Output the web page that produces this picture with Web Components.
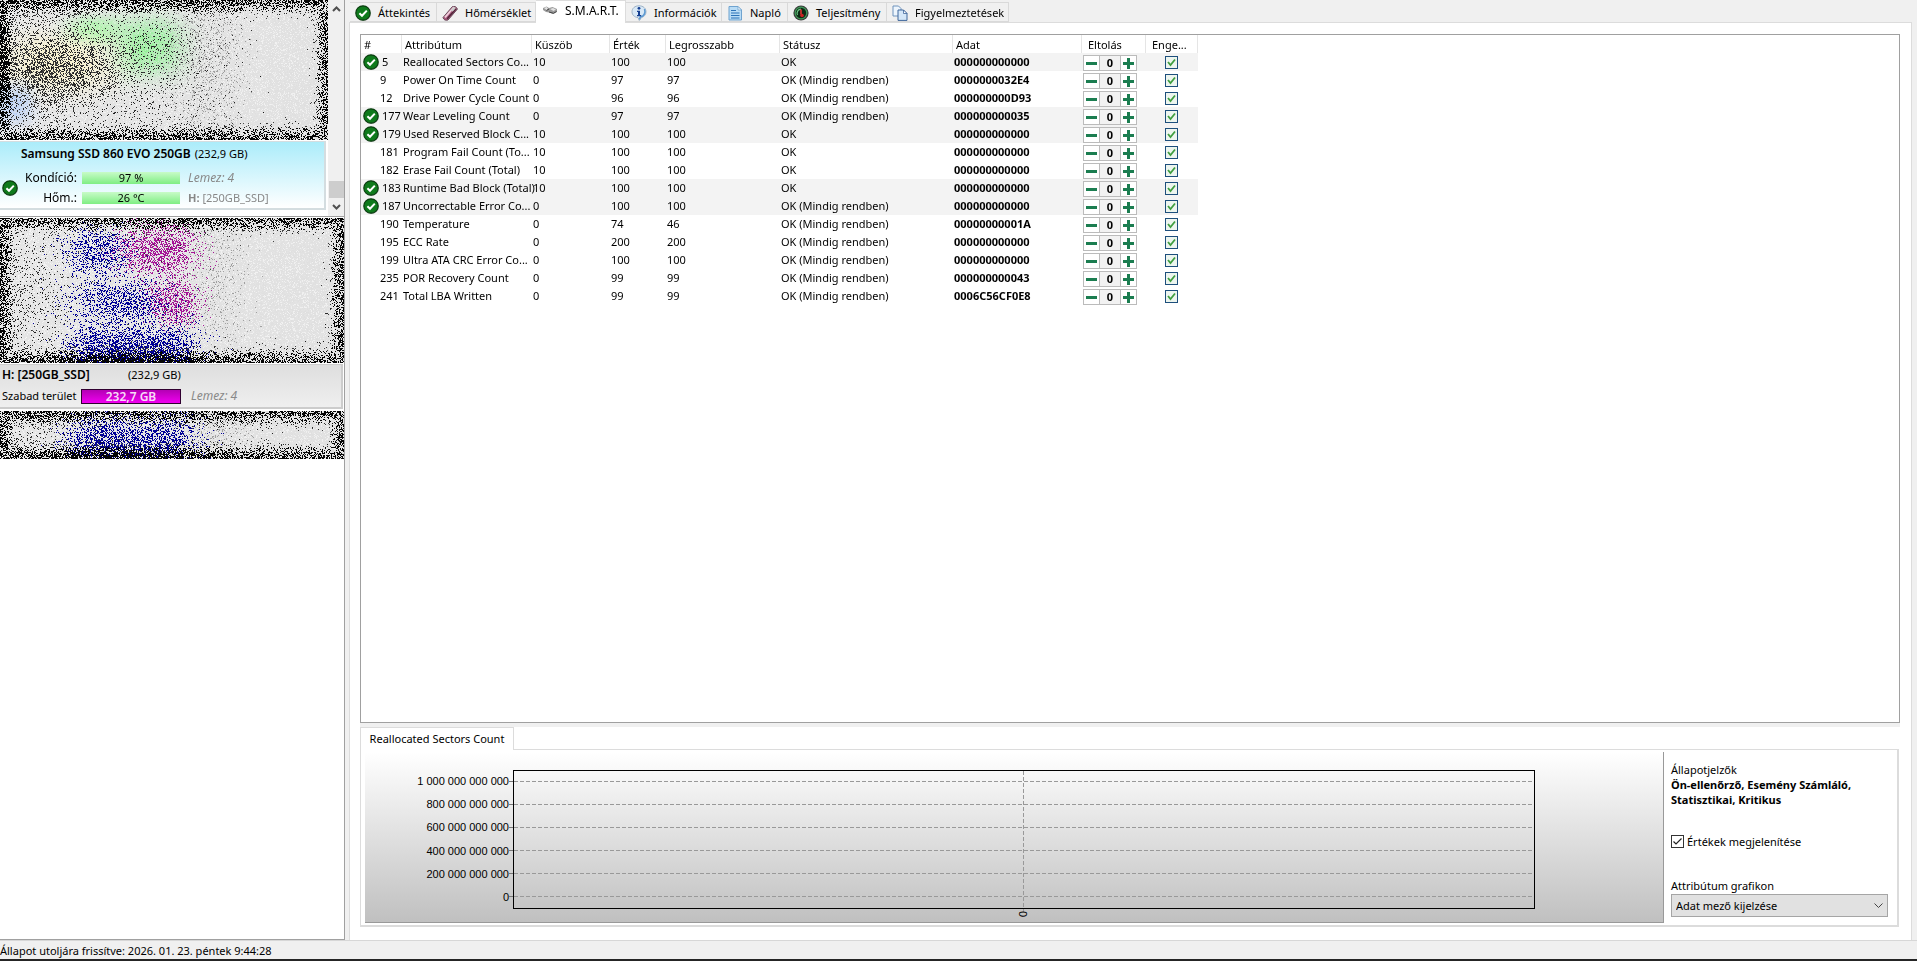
<!DOCTYPE html>
<html lang="hu">
<head>
<meta charset="utf-8">
<title>S.M.A.R.T.</title>
<style>
html, body { margin: 0; height: 100%; }
body { font: 11px/18px "Noto Sans", "Open Sans", sans-serif; color: #000; background: #f0f0f0; overflow: hidden; }
</style>
</head>
<body>
<disk-monitor></disk-monitor>
<script>
const define = (name, html, setup) => {
  const template = document.createElement('template');
  template.innerHTML = html;
  customElements.define(name, class extends HTMLElement {
    constructor() {
      super();
      this.attachShadow({ mode: 'open' }).append(template.content.cloneNode(true));
    }
    connectedCallback() { if (setup) setup(this, this.shadowRoot); }
  });
};

/* ---------- icons ---------- */
const ICONS = {
  ok: `<circle cx="8.7" cy="8.9" r="7" fill="#777" opacity=".6"/><circle cx="8" cy="8" r="7.2" fill="#0f7a1c" stroke="#0a3d10" stroke-width="1.2"/><path d="M4.4 8.2l2.6 2.6 4.8-5.2" fill="none" stroke="#fff" stroke-width="2"/>`,
  temp: `<path d="M1 12.500L10.500 1.500q3.500-1 5 2.500L6 15Q2 16 1 12.500z" fill="#a8587c" stroke="#5d4150" stroke-width=".9"/><path d="M3 12.300L12 2" stroke="#f0cfdc" stroke-width="1.800"/><path d="M5.200 13.700L14 3.800" stroke="#4e2438" stroke-width="1.300"/><path d="M8.500 5.500L11.500 2l2.500.7-3.200 3.800z" fill="#ccc"/>`,
  disk: `<path d="M1 5l3.500-1.500 2.500 1.500 3.500-1 4.500 2v3l-4 2-4-1.500-3-.5-3-2z" fill="#9a9a9a"/><path d="M2 5l2.500-1L6 5.500 4.500 7zM8 6l3-1 3 1.500-2.500 1.500z" fill="#e2e2e2"/><path d="M4.500 7.500L7 6M7 9l4.500 1.300 3-1.800" stroke="#444" fill="none"/>`,
  info: `<path d="M8 .8c4.200 0 7 2.500 7 6 0 3-2 5-4.500 5.700L8.300 15.500 7 12.600C3.500 12.200 1 10 1 6.800c0-3.500 2.800-6 7-6z" fill="#d8e8f6" stroke="#9fb3c6"/><path d="M13.500 4c1.500 4-1 7.500-4 7.800l-1.200 2.500" fill="none" stroke="#5c9ad2" stroke-width="1.600"/><circle cx="8" cy="3.300" r="1.400" fill="#153f91"/><path d="M6 5.800h3v4.200h1.200v1.200H6V10h1V7H6z" fill="#153f91"/>`,
  log: `<path d="M2 1.500h9l3.500 3.500v10H2z" fill="#b9dcf6" stroke="#6fa3cf"/><path d="M11 1.500V5h3.500z" fill="#fff" stroke="#6fa3cf" stroke-width=".8"/><path d="M4 5.500h5M4 8h8.500M4 10.500h8.500M4 13h8.500" stroke="#2d73b8" stroke-width="1.200"/>`,
  gauge: `<circle cx="8" cy="8" r="7.600" fill="#3c3c3c"/><circle cx="8" cy="8" r="5.800" fill="#0d2a14" stroke="#3f9a58" stroke-width="1.200"/><path d="M4.500 10A4 4 0 0 1 8 4.200" fill="none" stroke="#69c483" stroke-width="1.200"/><path d="M8 9.500V4.500" stroke="#e33" stroke-width="1.500"/><circle cx="9" cy="10.500" r="1.800" fill="#c22"/>`,
  copy: `<path d="M1 1h5.500L9 3.500V11H1z" fill="#edf5fd" stroke="#6f93bd"/><path d="M6 5h5.500L15 8.500V15.400H6z" fill="#d5e7f8" stroke="#3f669b"/><path d="M11.500 5v3.500H15z" fill="#fff" stroke="#3f669b" stroke-width=".8"/>`
};
define('ui-icon', `<style>:host{display:block;flex:none;width:16px;height:16px}svg{display:block;width:100%;height:100%;overflow:visible}</style><svg viewBox="0 0 16 16" aria-hidden="true"></svg>`,
  (el, root) => { root.querySelector('svg').innerHTML = ICONS[el.getAttribute('name')]; });

/* ---------- pixel noise that hides private entries ---------- */
const NOISE = {
  disks: { dark: [[60, 72, 60, 26, .45], [120, 40, 90, 30, .2], [20, 60, 60, 60, .3], [110, 90, 100, 40, .14]], grey: [[215, 65, 34, 70, .16]],
    tint: [[98, 30, 28, 14, [160, 245, 160]], [155, 46, 36, 28, [140, 242, 145]], [60, 62, 56, 28, [254, 246, 200]], [12, 104, 22, 20, [180, 205, 248]]], spots: [] },
  volumes: { dark: [[28, 70, 40, 60, .16], [120, 150, 80, 18, .35], [120, 70, 60, 80, .04]], grey: [[215, 60, 30, 80, .1]], tint: [],
    spots: [[98, 33, 28, 20, .46, [0, 0, 150]], [158, 32, 34, 22, .5, [165, 20, 150]], [120, 84, 44, 19, .45, [0, 0, 150]], [174, 84, 22, 20, .45, [165, 20, 150]], [106, 132, 34, 22, .6, [0, 0, 150]], [160, 134, 32, 22, .6, [0, 0, 150]]] },
  tail: { dark: [[28, 24, 40, 30, .15], [120, 46, 80, 14, .3]], grey: [[215, 24, 30, 40, .12]], tint: [],
    spots: [[100, 30, 32, 22, .5, [0, 0, 150]], [156, 30, 36, 22, .5, [0, 0, 150]]] }
};
define('noise-mask', `<style>:host{display:block;flex:none}canvas{display:block;width:100%;height:100%;image-rendering:pixelated}</style><canvas></canvas>`, (el, root) => {
  const c = root.querySelector('canvas'), W = c.width = el.clientWidth, H = c.height = el.clientHeight;
  const cfg = NOISE[el.getAttribute('kind')], ctx = c.getContext('2d'), img = ctx.createImageData(W, H);
  let s = 12345 + H;
  const rnd = () => { s = (Math.imul(s, 1664525) + 1013904223) >>> 0; return s / 4294967296; };
  const bump = (x, y, b) => Math.exp(-((Math.abs(x - b[0]) / b[2]) ** 2.6) - (Math.abs(y - b[1]) / b[3]) ** 2.6);
  for (let y = 0; y < H; y++) for (let x = 0; x < W; x++) {
    const e = Math.min(x, y, W - 1 - x, H - 1 - y);
    let v = 229 - 4 * x / W + (rnd() - .5) * 6;
    if (rnd() < .18) v += 14;
    let col = [v, v, v];
    for (const t of cfg.tint) { const k = bump(x, y, t) * (.4 + rnd() * .6); col = col.map((q, i) => q + (t[4][i] - q) * k); }
    for (const g of cfg.grey) if (rnd() < g[4] * bump(x, y, g)) col = [160, 160, 160];
    for (const p of cfg.spots) if (rnd() < p[4] * bump(x, y, p)) col = p[5];
    let d = .56 * Math.exp(-((e / 10) ** 2));
    for (const b of cfg.dark) d += b[4] * bump(x, y, b) * .6;
    if (rnd() < d) { const n = e < 12 ? 5 : 20 + rnd() * 60; col = [n, n, n]; }
    img.data.set([...col, 255], (y * W + x) * 4);
  }
  ctx.putImageData(img, 0, 0);
});

/* ---------- left column ---------- */
define('level-bar', `<style>
:host{display:block;box-sizing:border-box;width:98px;height:12px;font-size:11px;line-height:12px;text-align:center;background:linear-gradient(#c8fbc8,#7fee83)}
:host([volume]){width:100px;height:15px;line-height:14px;border:1px solid #300030;background:linear-gradient(#b400b4,#f000f0);color:#f7dcf7;font-weight:600;font-size:12px}
</style><slot></slot>`);

define('disk-card', `<style>
:host{display:block;box-sizing:border-box;width:326px;height:69px;margin-top:1px;padding:3px 0 0 2px;border:solid #d4dde0;border-width:1px 2px 2px 0;background:linear-gradient(#abecfa,#fff)}
h2{margin:0 0 6px 19px;font-size:12px;line-height:18px;font-weight:400;display:flex;gap:4px}
h2 b{font-weight:600}
h2 span{font-size:11px}
.body{display:grid;grid-template-columns:16px 64px 98px 1fr;align-items:center;row-gap:2px}
ui-icon{grid-row:1/3}
.l{text-align:right;padding-right:5px;font-size:12px}
.n{padding-left:8px;color:#888}
i.n{font-size:12px}
</style>
<h2><b>Samsung SSD 860 EVO 250GB</b><span>(232,9 GB)</span></h2>
<div class="body"><ui-icon name="ok"></ui-icon>
<span class="l">Kondíció:</span><level-bar>97 %</level-bar><i class="n">Lemez: 4</i>
<span class="l">Hőm.:</span><level-bar>26 °C</level-bar><span class="n"><b>H:</b> [250GB_SSD]</span></div>`);

define('volume-card', `<style>
:host{display:block;box-sizing:border-box;height:45px;margin:1px 1px 2px 0;padding:0 0 0 2px;border:solid #ccc;border-width:1px 2px 2px 0;background:linear-gradient(#dedede,#efefef)}
.r{display:flex;align-items:center;height:20px}
.r+.r{height:22px}
b{width:126px;font-size:12px;font-weight:600}
.l{width:79px}
i{color:#888;padding-left:10px;font-size:12px}
</style><div class="r"><b>H: [250GB_SSD]</b><span>(232,9 GB)</span></div>
<div class="r"><span class="l">Szabad terület</span><level-bar volume>232,7 GB</level-bar><i>Lemez: 4</i></div>`);

define('scroll-rail', `<style>
:host{display:flex;flex-direction:column;align-items:center;width:16px;background:#f0f0f0}
button{border:0;padding:0;margin:0;width:16px;height:18px;background:none;display:grid;place-items:center}
button:first-child{height:22px}
.track{flex:1;width:15px;display:flex;flex-direction:column;justify-content:flex-end}
.thumb{height:17px;background:#cdcdcd}
path{fill:none;stroke:#505050;stroke-width:2}
</style><button aria-label="Fel"><svg width="9" height="6"><path d="M1 5l3.500-3.500L8 5"/></svg></button>
<div class="track"><div class="thumb"></div></div>
<button aria-label="Le"><svg width="9" height="6"><path d="M1 1l3.500 3.500L8 1"/></svg></button>`);

define('disk-sidebar', `<style>
:host{display:block;box-sizing:border-box;width:345px;flex:none;background:#fff;border:solid #a0a0a0;border-width:0 1px 1px 0}
.top{display:flex;height:216px;border-bottom:1px solid #a0a0a0}
.list{flex:1;min-width:0}
.list noise-mask{height:140px}
.vol{padding-top:1px}
.vol noise-mask{height:145px}
.vol .tail{height:48px}
</style><div class="top"><div class="list"><noise-mask kind="disks"></noise-mask><disk-card></disk-card></div><scroll-rail></scroll-rail></div>
<div class="vol"><noise-mask kind="volumes"></noise-mask><volume-card></volume-card><noise-mask class="tail" kind="tail"></noise-mask></div>`);

/* ---------- tabs ---------- */
define('tab-item', `<style>
:host{display:block;height:20px}
:host([active]){height:22px;align-self:flex-start;position:relative;z-index:1;margin-bottom:-1px}
button{box-sizing:border-box;width:100%;height:100%;display:flex;align-items:center;gap:7px;padding:1px 0 0 5px;margin:0;border:1px solid #d9d9d9;border-left:0;background:#f0f0f0;font:inherit;color:#000;white-space:nowrap}
:host([active]) button{height:23px;background:#fff;border-color:#dcdcdc;border-bottom:0;padding:0 0 3px 6px;font-size:12px}
</style><button role="tab"><ui-icon></ui-icon><slot></slot></button>`,
  (el, root) => {
    const icon = document.createElement('ui-icon');
    icon.setAttribute('name', el.getAttribute('icon'));
    root.querySelector('ui-icon').replaceWith(icon);
    root.querySelector('button').setAttribute('aria-selected', el.hasAttribute('active'));
  });

define('tab-strip', `<style>
:host{display:flex;align-items:flex-end;height:22px;padding-left:1px}
</style><slot></slot>`);

/* ---------- attribute table ---------- */
define('offset-stepper', `<style>
:host{display:flex;width:54px;height:16px;box-sizing:border-box;border:1px solid #bbb;margin-top:1px}
button,output{box-sizing:border-box;border:0;padding:0;margin:0;height:14px;background:#fff;display:grid;place-items:center}
button{width:15px}
output{flex:1;border:solid #bbb;border-width:0 1px;background:#f2f2f2;font-weight:700;line-height:14px}
path{fill:#1b7d50}
</style><button aria-label="Csökkentés"><svg width="13" height="12"><path d="M1 5h11v3H1z"/></svg></button><output>0</output><button aria-label="Növelés"><svg width="13" height="12"><path d="M1 5h4V1h3v4h4v3H8v4H5V8H1z"/></svg></button>`);

const ROWS = [
  [1, 5, 'Reallocated Sectors Co...', 10, 100, 100, 0, '000000000000'],
  [0, 9, 'Power On Time Count', 0, 97, 97, 1, '0000000032E4'],
  [0, 12, 'Drive Power Cycle Count', 0, 96, 96, 1, '000000000D93'],
  [1, 177, 'Wear Leveling Count', 0, 97, 97, 1, '000000000035'],
  [1, 179, 'Used Reserved Block C...', 10, 100, 100, 0, '000000000000'],
  [0, 181, 'Program Fail Count (To...', 10, 100, 100, 0, '000000000000'],
  [0, 182, 'Erase Fail Count (Total)', 10, 100, 100, 0, '000000000000'],
  [1, 183, 'Runtime Bad Block (Total)', 10, 100, 100, 0, '000000000000'],
  [1, 187, 'Uncorrectable Error Co...', 0, 100, 100, 1, '000000000000'],
  [0, 190, 'Temperature', 0, 74, 46, 1, '00000000001A'],
  [0, 195, 'ECC Rate', 0, 200, 200, 1, '000000000000'],
  [0, 199, 'Ultra ATA CRC Error Co...', 0, 100, 100, 1, '000000000000'],
  [0, 235, 'POR Recovery Count', 0, 99, 99, 1, '000000000043'],
  [0, 241, 'Total LBA Written', 0, 99, 99, 1, '0006C56CF0E8']
];
define('attribute-table', `<style>
:host{display:block;box-sizing:border-box;border:1px solid #a0a0a0;background:#fff;overflow:hidden}
table{table-layout:fixed;border-collapse:collapse;width:837px}
th,td{padding:0 0 0 1px;height:18px;line-height:18px;text-align:left;white-space:nowrap;font-weight:400}
th{padding-left:3px;box-shadow:inset -1px 0 #e5e5e5;line-height:20px;height:18px;overflow:hidden}
th div{height:18px}
th:nth-child(8),th:nth-child(9){padding-left:6px}
tr.ok{background:#f3f3f3}
.id{display:flex;align-items:center;gap:3px;height:18px;padding-left:1px}
.id span{margin-left:auto;width:22px}
td:nth-child(7){font-weight:700}
td.c{padding-left:19px}
input{appearance:none;display:block;box-sizing:border-box;width:13px;height:13px;margin:1px 0 0;border:1px solid #1d4f7c;background:#edf5ef url("data:image/svg+xml,%3Csvg xmlns='http://www.w3.org/2000/svg' viewBox='0 0 11 11'%3E%3Cpath d='M2 5l2.500 3L9 2.500' fill='none' stroke='%233f9e3f' stroke-width='1.800'/%3E%3C/svg%3E")}
</style><table><colgroup><col style="width:41px"><col style="width:130px"><col style="width:78px"><col style="width:56px"><col style="width:114px"><col style="width:173px"><col style="width:129px"><col style="width:64px"><col style="width:52px"></colgroup>
<thead><tr><th><div>#</div></th><th><div>Attribútum</div></th><th><div>Küszöb</div></th><th><div>Érték</div></th><th><div>Legrosszabb</div></th><th><div>Státusz</div></th><th><div>Adat</div></th><th><div>Eltolás</div></th><th><div>Enge...</div></th></tr></thead><tbody></tbody></table>`,
  (el, root) => {
    root.querySelector('tbody').innerHTML = ROWS.map(([ok, id, name, th, val, worst, always, data]) =>
      `<tr class="${ok ? 'ok' : ''}"><td><div class="id">${ok ? '<ui-icon name="ok"></ui-icon>' : ''}<span>${id}</span></div></td><td>${name}</td><td>${th}</td><td>${val}</td><td>${worst}</td><td>OK${always ? ' (Mindig rendben)' : ''}</td><td>${data}</td><td><offset-stepper></offset-stepper></td><td class="c"><input type="checkbox" checked aria-label="Engedélyezve: ${id}"></td></tr>`).join('');
  });

/* ---------- chart ---------- */
define('value-chart', `<style>
:host{display:flex;box-sizing:border-box;padding:18px 128px 12px 0;height:171px;border:solid #999;border-width:0 1px 1px 0;background:linear-gradient(#fff,#c0c0c0);font:11px/12px "Liberation Sans",Arial,sans-serif}
.labels{box-sizing:border-box;width:148px;height:140px;padding:5px 0 7px;display:flex;flex-direction:column;justify-content:space-between}
.labels span{display:flex;align-items:center;justify-content:flex-end}
.labels span::after{content:"";width:4px;height:1px;background:#777}
.plot{flex:1;height:137px;border:1px solid #000;position:relative}
.grid{box-sizing:border-box;height:100%;padding:10px 0 11px;display:flex;flex-direction:column;justify-content:space-between}
.grid i{height:1px;background:repeating-linear-gradient(90deg,#999 0 4px,transparent 4px 6px)}
.v{position:absolute;left:50%;top:0;bottom:-4px;width:1px;margin-left:-1px;background:repeating-linear-gradient(#999 0 4px,transparent 4px 6px)}
.x{position:absolute;left:50%;top:100%;margin:3px 0 0 -7px;writing-mode:vertical-rl}
</style><div class="labels"><span>1 000 000 000 000</span><span>800 000 000 000</span><span>600 000 000 000</span><span>400 000 000 000</span><span>200 000 000 000</span><span>0</span></div>
<div class="plot"><div class="grid"><i></i><i></i><i></i><i></i><i></i><i></i></div><div class="v"></div><span class="x">0</span></div>`);

define('chart-options', `<style>
:host{display:flex;flex-direction:column;align-items:flex-start;box-sizing:border-box;width:233px;padding:10px 9px 0 7px;line-height:15px}
p{margin:0}
.b{font-weight:700;margin-bottom:27px;width:205px}
.c{display:flex;align-items:center;gap:3px;margin-bottom:29px}
input{appearance:none;box-sizing:border-box;width:13px;height:13px;margin:0;border:1px solid #333;background:#fff url("data:image/svg+xml,%3Csvg xmlns='http://www.w3.org/2000/svg' viewBox='0 0 11 11'%3E%3Cpath d='M1.500 5.500l2.500 2.500L9.500 2.500' fill='none' stroke='%23222' stroke-width='1.200'/%3E%3C/svg%3E")}
select{appearance:none;box-sizing:border-box;width:100%;height:23px;margin-top:1px;padding:0 4px;border:1px solid #a5a5a5;border-radius:0;font:inherit;color:#000;background:#e1e1e1 url("data:image/svg+xml,%3Csvg xmlns='http://www.w3.org/2000/svg' width='9' height='6'%3E%3Cpath d='M.5.5l4 4 4-4' fill='none' stroke='%23444'/%3E%3C/svg%3E") no-repeat right 4px center}
</style><p>Állapotjelzők</p><p class="b">Ön-ellenőrző, Esemény Számláló, Statisztikai, Kritikus</p>
<label class="c"><input type="checkbox" checked>Értékek megjelenítése</label>
<label for="g">Attribútum grafikon</label><select id="g"><option>Adat mező kijelzése</option></select>`);

define('chart-panel', `<style>
:host{display:block}
button{display:block;box-sizing:border-box;position:relative;width:154px;height:23px;margin:0 0 -1px;padding:0;border:1px solid #dcdcdc;border-bottom:0;background:#fff;font:inherit;color:#000}
.p{display:flex;border:1px solid #dcdcdc;border-right-width:2px;border-bottom-width:2px;padding:2px 0 2px 4px;background:#fff}
value-chart{flex:1;min-width:0}
</style><button role="tab" aria-selected="true">Reallocated Sectors Count</button><div class="p"><value-chart></value-chart><chart-options></chart-options></div>`);

/* ---------- window ---------- */
define('disk-monitor', `<style>
:host{display:flex;flex-direction:column;height:100vh;background:#f0f0f0}
.main{flex:1;min-height:0;display:flex;gap:4px;padding-right:5px}
.right{flex:1;min-width:0;display:flex;flex-direction:column}
.page{flex:1;min-height:0;display:flex;flex-direction:column;box-sizing:border-box;border:1px solid #dcdcdc;border-bottom:0;background:#fff;padding:11px 11px 13px 10px}
attribute-table{flex:1;min-height:0}
.split{height:4px;background:#f0f0f0;flex:none}
chart-panel{margin-right:1px}
footer{box-sizing:border-box;height:19px;border-top:1px solid #d7d7d7;line-height:19px;white-space:nowrap;flex:none}
.edge{height:2px;background:#252525;flex:none}
</style>
<div class="main"><disk-sidebar></disk-sidebar><div class="right">
<tab-strip role="tablist">
<tab-item icon="ok" style="width:87px">Áttekintés</tab-item><tab-item icon="temp" style="width:99px">Hőmérséklet</tab-item><tab-item icon="disk" active style="width:90px">S.M.A.R.T.</tab-item><tab-item icon="info" style="width:96px">Információk</tab-item><tab-item icon="log" style="width:66px">Napló</tab-item><tab-item icon="gauge" style="width:99px">Teljesítmény</tab-item><tab-item icon="copy" style="width:122px">Figyelmeztetések</tab-item>
</tab-strip>
<div class="page"><attribute-table></attribute-table><div class="split"></div><chart-panel></chart-panel></div>
</div></div>
<footer>Állapot utoljára frissítve: 2026. 01. 23. péntek 9:44:28</footer><div class="edge"></div>`);
</script>
</body>
</html>
